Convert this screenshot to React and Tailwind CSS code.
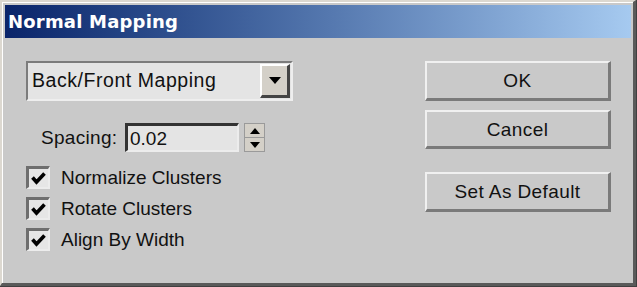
import React from "react";

const font = { fontFamily: '"Liberation Sans", Arial, sans-serif' };

function Check() {
  return (
    <div className="w-[24px] h-[23px] border-t-[3px] border-l-[3px] border-t-[#6e6e6e] border-l-[#6e6e6e] border-b-2 border-r-2 border-b-[#ececec] border-r-[#ececec] bg-[#e6e6e6] flex items-center justify-center">
      <svg width="15" height="13" viewBox="0 0 15 13">
        <polyline points="1.5,5.5 5.5,10 13.5,1.5" fill="none" stroke="#000" strokeWidth="3.6" />
      </svg>
    </div>
  );
}

function Btn({ children, h = "h-[40px]" }) {
  return (
    <div className={`w-[186px] ${h} border-t-2 border-l-2 border-t-[#f0f0f0] border-l-[#f0f0f0] border-b-[3px] border-r-[3px] border-b-[#7a7a7a] border-r-[#7a7a7a] bg-[#c9c9c9] flex items-center justify-center text-[19px] leading-none tracking-[0.4px] text-[#111]`}>
      {children}
    </div>
  );
}

export default function App() {
  return (
    <div className="w-[637px] h-[287px] bg-[#404040]" style={font}>
      <div className="w-[636px] h-[286px] border-t-2 border-l-2 border-t-[#dcd8d0] border-l-[#dcd8d0] border-b-[3px] border-r-[3px] border-b-[#5a5a5a] border-r-[#5a5a5a] bg-[#c9c9c9]">
        <div className="h-full border-t-[1px] border-l-[1px] border-white pt-[2px] pl-[2px] pr-[2px] flex flex-col">
          <div className="h-[33px] bg-gradient-to-r from-[#0a246a] to-[#a6caf0] flex items-center pl-[3px]">
            <span className="text-white text-[18px] font-bold tracking-[0.2px]" style={{ fontFamily: '"DejaVu Sans", sans-serif' }}>
              Normal Mapping
            </span>
          </div>
          <div className="flex-1 flex justify-between pl-[21px] pr-[20px] pt-[23px]">
            <div className="flex flex-col">
              <div className="w-[267px] h-[40px] border-t-2 border-l-2 border-t-[#7c7c7c] border-l-[#7c7c7c] border-b-2 border-r-2 border-b-[#eeeeee] border-r-[#eeeeee] bg-[#e4e4e4] flex items-center justify-between pl-[4px] pr-[1px]">
                <span className="text-[19.5px] leading-none tracking-[0.55px] text-[#111]">Back/Front Mapping</span>
                <div className="w-[30px] h-[34px] border-t-2 border-l-2 border-t-white border-l-white border-b-[3px] border-r-[3px] border-b-[#444] border-r-[#444] bg-[#d4d0c8] flex items-center justify-center">
                  <svg width="12" height="7" viewBox="0 0 12 7">
                    <polygon points="0,0 12,0 6,7" fill="#000" />
                  </svg>
                </div>
              </div>
              <div className="flex items-center mt-[22px] ml-[15px]">
                <span className="text-[19px] leading-none tracking-[0.3px] text-[#111] w-[84px]">Spacing:</span>
                <div className="w-[114px] h-[29px] border-t-[3px] border-l-[3px] border-t-[#333] border-l-[#333] border-b-2 border-r-2 border-b-[#ececec] border-r-[#ececec] bg-[#e4e4e4] flex items-center pl-[2px]">
                  <span className="text-[19px] leading-none text-[#111]">0.02</span>
                </div>
                <div className="ml-[5px] w-[21px] h-[29px] flex flex-col bg-[#d4d0c8] border border-[#9a9a9a]">
                  <div className="flex-1 flex items-center justify-center border-b border-[#9a9a9a]">
                    <svg width="10" height="6" viewBox="0 0 10 6"><polygon points="0,6 10,6 5,0" fill="#000" /></svg>
                  </div>
                  <div className="flex-1 flex items-center justify-center">
                    <svg width="10" height="6" viewBox="0 0 10 6"><polygon points="0,0 10,0 5,6" fill="#000" /></svg>
                  </div>
                </div>
              </div>
              <div className="flex flex-col gap-[8px] mt-[14px]">
                {["Normalize Clusters", "Rotate Clusters", "Align By Width"].map((t) => (
                  <div key={t} className="flex items-center gap-[11px] h-[23px]">
                    <Check />
                    <span className="text-[19px] leading-none text-[#111]">{t}</span>
                  </div>
                ))}
              </div>
            </div>
            <div className="flex flex-col">
              <Btn>OK</Btn>
              <div className="mt-[9px]"><Btn h="h-[39px]">Cancel</Btn></div>
              <div className="mt-[23px]"><Btn>Set As Default</Btn></div>
            </div>
          </div>
        </div>
      </div>
    </div>
  );
}
